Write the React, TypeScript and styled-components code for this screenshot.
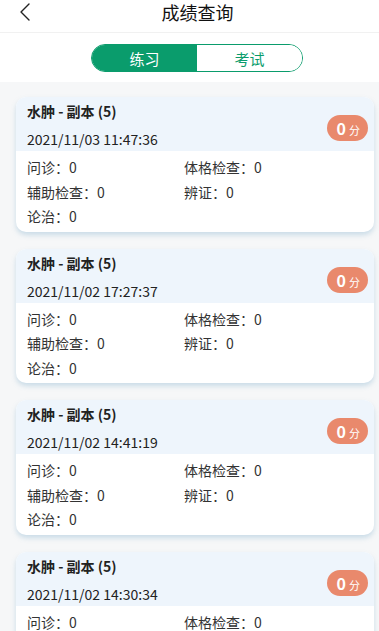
import React, { useState } from 'react';
import styled, { createGlobalStyle } from 'styled-components';

const GlobalStyle = createGlobalStyle`
  html, body {
    margin: 0;
    padding: 0;
    background: #f6f7f8;
    font-family: "Noto Sans CJK SC", "Noto Sans", sans-serif;
  }
  * { box-sizing: border-box; }
`;

const Page = styled.div`
  width: 379px;
  height: 631px;
  background: #f6f7f8;
  overflow: hidden;
`;

const Header = styled.div`
  height: 33px;
  background: #fff;
  display: flex;
  align-items: flex-start;
  justify-content: center;
  position: relative;
  padding-left: 16px;
  border-bottom: 1px solid #f1f1f1;
`;

const BackButton = styled.button`
  position: absolute;
  left: 14px;
  top: 1px;
  width: 22px;
  height: 22px;
  padding: 0;
  border: none;
  background: none;
  display: flex;
  align-items: center;
  justify-content: center;
`;

const Title = styled.h1`
  margin: 0;
  font-size: 18px;
  font-weight: 400;
  color: #111;
  line-height: 24px;
`;

const TabBar = styled.div`
  background: #fff;
  height: 49px;
  display: flex;
  justify-content: center;
  align-items: flex-start;
  padding: 11px 0 0 15px;
`;

const Toggle = styled.div`
  width: 212px;
  height: 28px;
  border: 1.5px solid #0a9c6c;
  border-radius: 14px;
  display: flex;
  overflow: hidden;
`;

const TabItem = styled.div<{ $active: boolean }>`
  flex: 1;
  display: flex;
  align-items: center;
  justify-content: center;
  font-size: 15px;
  background: ${p => (p.$active ? '#0a9c6c' : '#fff')};
  color: ${p => (p.$active ? '#fff' : '#0a9c6c')};
  cursor: pointer;
`;

const List = styled.div`
  display: flex;
  flex-direction: column;
  gap: 17px;
  padding: 15px 5px 20px 16px;
`;

const Card = styled.div`
  background: #fff;
  border-radius: 10px;
  overflow: hidden;
  box-shadow: 0 3px 5px rgba(120, 170, 200, 0.35);
`;

const CardHead = styled.div`
  background: #eef5fc;
  height: 54px;
  padding: 3px 6px 0 11px;
  display: flex;
  align-items: flex-start;
  justify-content: space-between;
`;

const HeadText = styled.div`
  display: flex;
  flex-direction: column;
`;

const CardTitle = styled.div`
  font-size: 14px;
  font-weight: 700;
  color: #222;
  line-height: 22px;
`;

const CardDate = styled.div`
  font-size: 14px;
  color: #222;
  line-height: 22px;
  margin-top: 6px;
`;

const Score = styled.div`
  background: #e9896c;
  color: #fff;
  border-radius: 13px;
  height: 26px;
  padding: 0 8px 0 10px;
  display: flex;
  align-items: baseline;
  justify-content: center;
  line-height: 26px;
  margin-top: 15px;
`;

const ScoreNum = styled.span`
  font-size: 16px;
  font-weight: 700;
  margin-right: 3px;
`;

const ScoreUnit = styled.span`
  font-size: 11px;
`;

const CardBody = styled.div`
  display: grid;
  grid-template-columns: 157px 1fr;
  padding: 4px 11px 3px 11px;
`;

const Field = styled.div`
  font-size: 14px;
  color: #333;
  line-height: 24.5px;
`;

const ChevronLeft = () => (
  <svg width="12" height="18" viewBox="0 0 12 18" fill="none">
    <path d="M10 1 L2 9 L10 17" stroke="#222" strokeWidth="1.4" strokeLinecap="round" strokeLinejoin="round" />
  </svg>
);

const records = [
  '2021/11/03 11:47:36',
  '2021/11/02 17:27:37',
  '2021/11/02 14:41:19',
  '2021/11/02 14:30:34',
];

export default function App() {
  const [tab, setTab] = useState(0);
  return (
    <Page>
      <GlobalStyle />
      <Header>
        <BackButton>
          <ChevronLeft />
        </BackButton>
        <Title>成绩查询</Title>
      </Header>
      <TabBar>
        <Toggle>
          <TabItem $active={tab === 0} onClick={() => setTab(0)}>练习</TabItem>
          <TabItem $active={tab === 1} onClick={() => setTab(1)}>考试</TabItem>
        </Toggle>
      </TabBar>
      <List>
        {records.map(date => (
          <Card key={date}>
            <CardHead>
              <HeadText>
                <CardTitle>水肿 - 副本 (5)</CardTitle>
                <CardDate>{date}</CardDate>
              </HeadText>
              <Score>
                <ScoreNum>0</ScoreNum>
                <ScoreUnit>分</ScoreUnit>
              </Score>
            </CardHead>
            <CardBody>
              <Field>问诊：0</Field>
              <Field>体格检查：0</Field>
              <Field>辅助检查：0</Field>
              <Field>辨证：0</Field>
              <Field>论治：0</Field>
            </CardBody>
          </Card>
        ))}
      </List>
    </Page>
  );
}
